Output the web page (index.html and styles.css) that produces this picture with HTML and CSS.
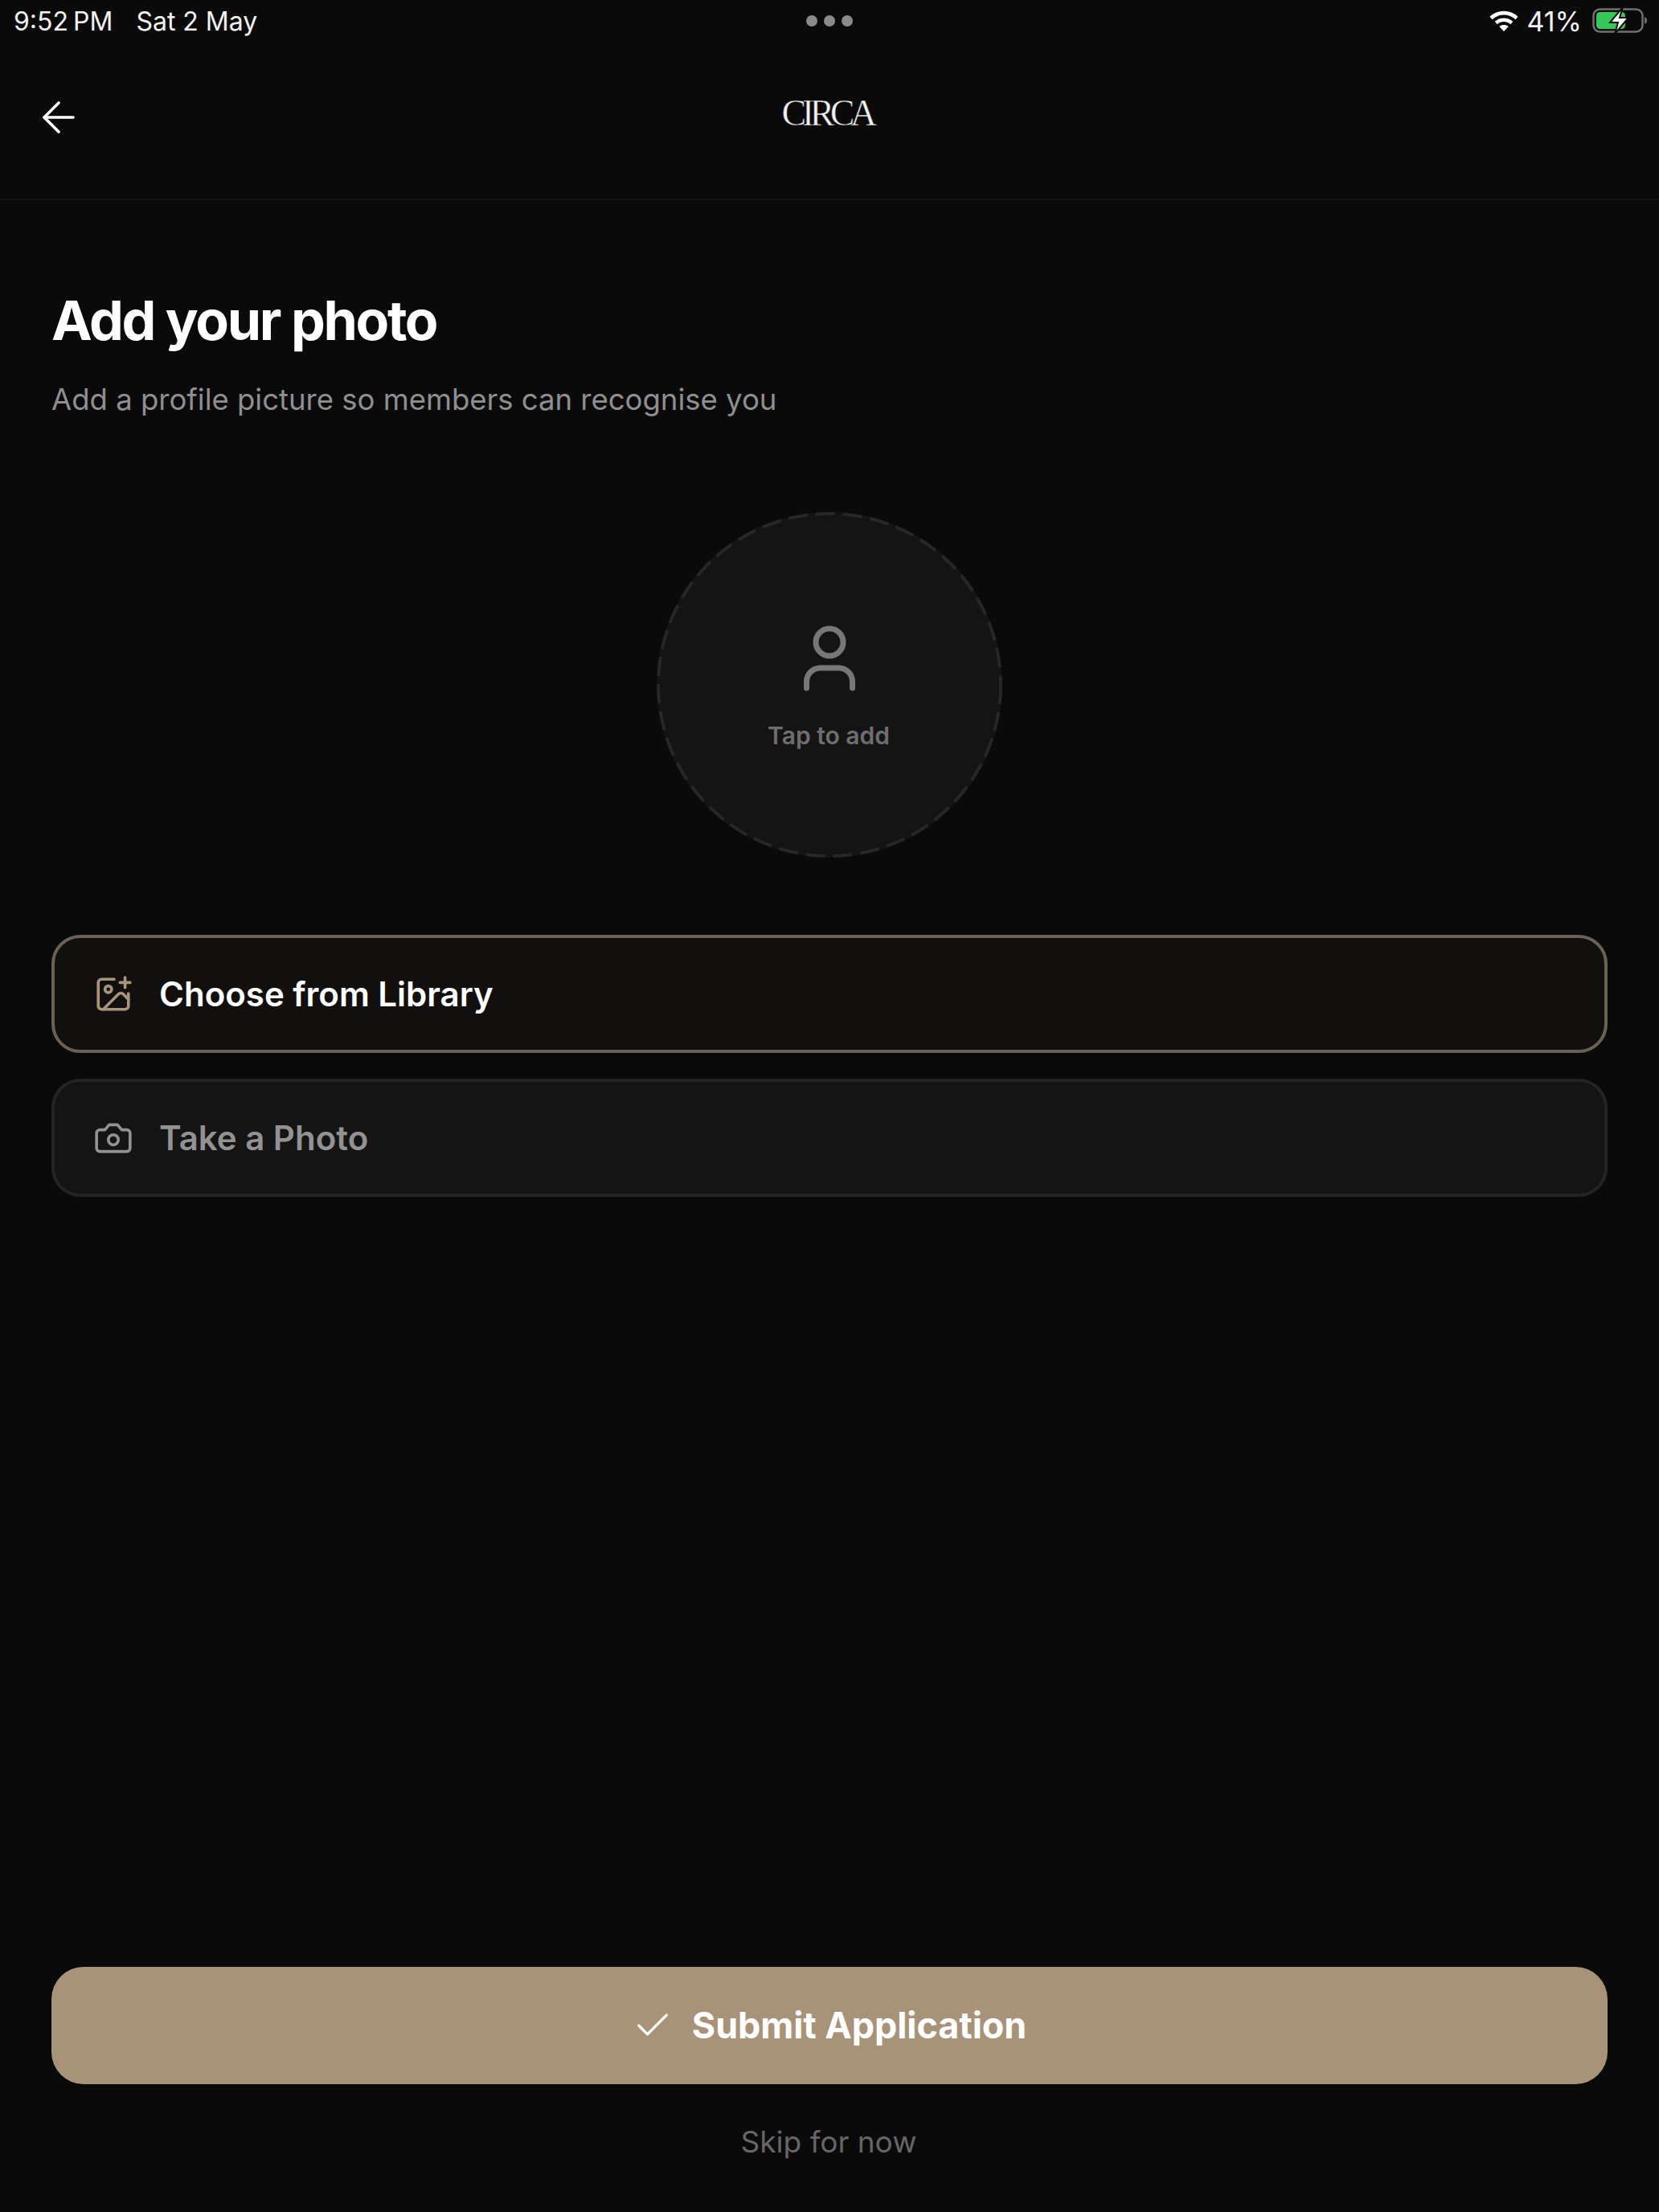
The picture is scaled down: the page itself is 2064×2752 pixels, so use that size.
FILE: index.html
```html
<!DOCTYPE html>
<html lang="en">
<head>
    <meta charset="UTF-8">
    <meta name="viewport" content="width=device-width, initial-scale=1.0">
    <title>Add your photo</title>
    <link rel="stylesheet" href="styles.css">
</head>
<body>
    <div class="page">
        <div class="status-bar">
            <div class="status-left">
                <span class="status-time">9:52 PM</span>
                <span>Sat 2 May</span>
            </div>
            <div class="status-dots"><i></i><i></i><i></i></div>
            <div class="status-right">
                <svg class="wifi" viewBox="0 0 36 28" fill="none" stroke="#fff" stroke-width="4.6">
                    <path d="M2 10.500C11 2 25 2 34 10.500"/>
                    <path d="M8.200 16.500c5.600-5 14-5 19.600 0"/>
                    <path d="M18 27l-5.600-6c3.200-2.600 8-2.600 11.200 0z" fill="#fff" stroke="none"/>
                </svg>
                <span class="status-level">41%</span>
                <svg class="battery" viewBox="0 0 68 34" fill="none">
                    <rect x="1.500" y="2.500" width="61" height="28" rx="8" stroke="#707070" stroke-width="2.500"/>
                    <rect x="5" y="6" width="36" height="21" rx="4.500" fill="#34c759"/>
                    <path d="M65 12c2 .5 3 2.500 3 4.500s-1 4-3 4.500z" fill="#707070"/>
                    <path d="M38 0 22 19h10l-4 14 17-20H34z" fill="#fff" stroke="#0a0a0a" stroke-width="2"/>
                </svg>
            </div>
        </div>

        <header class="top-bar">
            <svg class="back-icon" viewBox="0 0 40 40" fill="none" stroke="#fff" stroke-width="3.600" stroke-linecap="round" stroke-linejoin="round">
                <path d="M38 20H2"/>
                <path d="M20 2 2 20l18 18"/>
            </svg>
            <div class="logo">CIRCA</div>
        </header>

        <main class="content">
            <h1>Add your photo</h1>
            <p class="subtitle">Add a profile picture so members can recognise you</p>

            <div class="avatar">
                <svg class="avatar-ring" viewBox="0 0 430 430" fill="none">
                    <circle cx="215" cy="215" r="213" stroke="#272727" stroke-width="4" stroke-dasharray="24 10"/>
                </svg>
                <svg class="person-icon" viewBox="0 0 70 86" fill="none" stroke="#777" stroke-width="7" stroke-linecap="round">
                    <circle cx="35" cy="23" r="17"/>
                    <path d="M6.500 80V72a17 17 0 0 1 17-17h23a17 17 0 0 1 17 17v8"/>
                </svg>
                <span class="avatar-label">Tap to add</span>
            </div>

            <div class="options">
                <button class="option option-main">
                    <svg viewBox="0 0 24 24" fill="none" stroke="#a89479" stroke-width="1.750" stroke-linecap="round" stroke-linejoin="round">
                        <path d="M16 5h6"/>
                        <path d="M19 2v6"/>
                        <path d="M21 11.500V19a2 2 0 0 1-2 2H5a2 2 0 0 1-2-2V5a2 2 0 0 1 2-2h7.500"/>
                        <path d="m21 15-3.086-3.086a2 2 0 0 0-2.828 0L6 21"/>
                        <circle cx="9" cy="9" r="2"/>
                    </svg>
                    Choose from Library
                </button>
                <button class="option">
                    <svg viewBox="0 0 24 24" fill="none" stroke="#929292" stroke-width="1.750" stroke-linecap="round" stroke-linejoin="round">
                        <path d="M14.500 4h-5L7 7H4a2 2 0 0 0-2 2v9a2 2 0 0 0 2 2h16a2 2 0 0 0 2-2V9a2 2 0 0 0-2-2h-3l-2.500-3z"/>
                        <circle cx="12" cy="13" r="3"/>
                    </svg>
                    Take a Photo
                </button>
            </div>

            <div class="actions">
                <button class="submit">
                    <svg viewBox="0 0 24 24" fill="none" stroke="#fff" stroke-width="1.500" stroke-linecap="round" stroke-linejoin="round">
                        <path d="M20 6 9 17l-5-5"/>
                    </svg>
                    Submit Application
                </button>
                <div class="skip">Skip for now</div>
            </div>
        </main>
    </div>
</body>
</html>
```

FILE: styles.css
```css
* {
    box-sizing: border-box;
}
body {
    margin: 0;
    background: #0a0a0a;
    font-family: Inter, "Liberation Sans", sans-serif;
    color: #fff;
}
.page {
    height: 2752px;
    display: flex;
    flex-direction: column;
}

/* status bar */
.status-bar {
    height: 52px;
    padding: 0 15px 0 17px;
    display: flex;
    align-items: center;
    justify-content: space-between;
    font-size: 32px;
    color: #f2f2f2;
}
.status-left {
    width: 400px;
    display: flex;
    gap: 29px;
}
.status-time {
    word-spacing: -3px;
}
.status-dots {
    margin-right: 3px;
    display: flex;
    gap: 8px;
}
.status-dots i {
    width: 14px;
    height: 14px;
    border-radius: 50%;
    background: #8a8a8a;
}
.status-right {
    width: 400px;
    display: flex;
    align-items: center;
    justify-content: flex-end;
    gap: 13px;
}
.status-level {
    font-size: 34px;
}
.wifi {
    width: 36px;
    height: 28px;
    margin-right: -3px;
}
.battery {
    width: 68px;
    height: 34px;
}

/* header */
.top-bar {
    height: 197px;
    padding: 0 53px;
    border-bottom: 2px solid #141414;
    display: flex;
    align-items: center;
    position: relative;
}
.back-icon {
    width: 40px;
    height: 40px;
    margin-bottom: 8px;
}
.logo {
    position: absolute;
    left: 0;
    right: 6px;
    top: 60px;
    text-align: center;
    font-family: "Liberation Serif", serif;
    font-size: 46px;
    line-height: 58px;
    letter-spacing: -5.500px;
    color: #f0f0f0;
    -webkit-text-stroke: 0.5px #0a0a0a;
}

/* content */
.content {
    flex: 1;
    padding: 109px 64px 62px;
    display: flex;
    flex-direction: column;
}
h1 {
    margin: 0;
    font-size: 68px;
    line-height: 80px;
    font-weight: 700;
    letter-spacing: -2.300px;
}
.subtitle {
    margin: 37px 0 0;
    font-size: 36.500px;
    line-height: 44px;
    color: #8f8f8f;
}
.avatar {
    width: 430px;
    height: 430px;
    margin: 118px auto 0;
    padding-top: 3px;
    border-radius: 50%;
    background: #141414;
    display: flex;
    flex-direction: column;
    align-items: center;
    justify-content: center;
    position: relative;
}
.avatar-ring {
    position: absolute;
    top: 0;
    left: 0;
    width: 430px;
    height: 430px;
}
.person-icon {
    width: 70px;
    height: 86px;
}
.avatar-label {
    margin: 36px 2px 0 0;
    font-size: 30px;
    line-height: 34px;
    font-weight: 600;
    color: #6e6e6e;
}

/* option buttons */
.options {
    margin-top: 96px;
    display: flex;
    flex-direction: column;
    gap: 32px;
}
.option {
    height: 147px;
    padding: 0 48px;
    border: 4px solid #242424;
    border-radius: 36px;
    background: #141414;
    display: flex;
    align-items: center;
    gap: 32px;
    font-family: inherit;
    font-size: 42px;
    font-weight: 600;
    color: #929292;
}
.option svg {
    width: 50px;
    height: 50px;
}
.option-main {
    border-color: #6a6154;
    background: #12100e;
    color: #fff;
}

/* bottom */
.actions {
    margin-top: auto;
}
.submit {
    width: 100%;
    height: 146px;
    padding-right: 7px;
    border: none;
    border-radius: 40px;
    background: #a89379;
    display: flex;
    align-items: center;
    justify-content: center;
    gap: 23px;
    font-family: inherit;
    font-size: 44.800px;
    font-weight: 700;
    color: #fff;
}
.submit svg {
    width: 52px;
    height: 52px;
}
.skip {
    margin-top: 47px;
    padding-right: 2px;
    text-align: center;
    font-size: 37px;
    line-height: 50px;
    color: #666;
}
```
